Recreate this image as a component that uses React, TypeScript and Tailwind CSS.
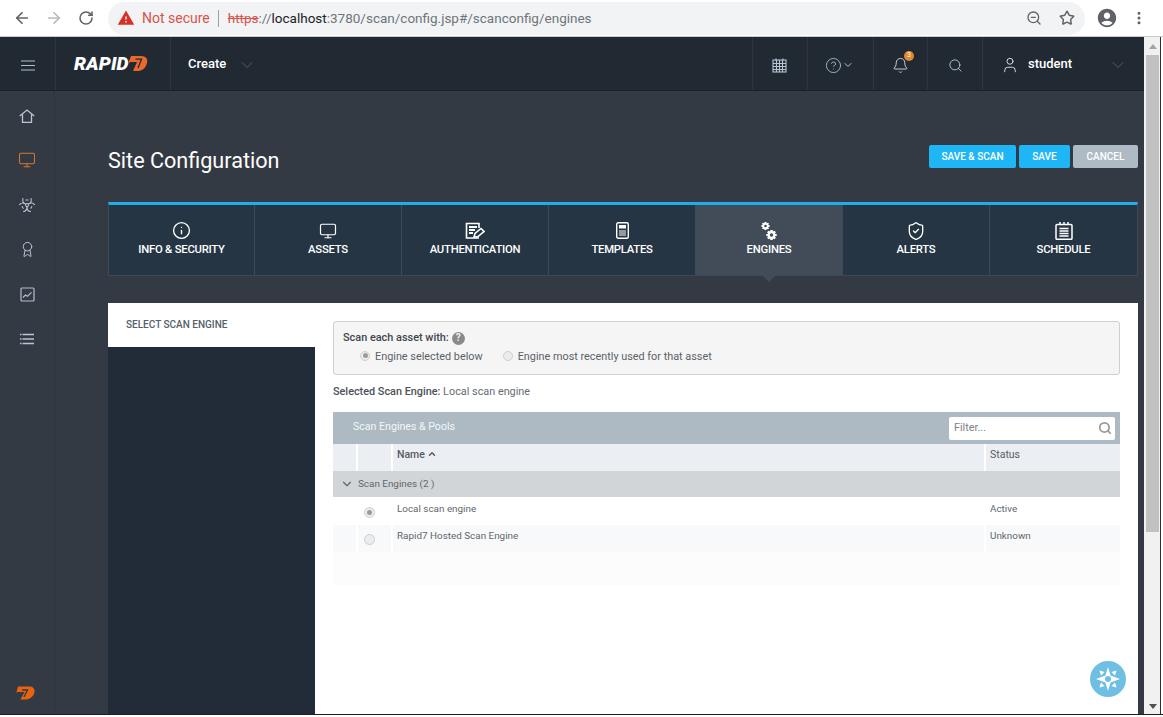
import { ArrowLeft, ArrowRight, RotateCw, ZoomOut, Star, MoreVertical, ChevronDown, ChevronUp, CircleHelp, Bell, Search, User, Monitor, Biohazard, Award, Info, ShieldCheck } from "lucide-react";
import { MdWarning, MdAccountCircle } from "react-icons/md";
import type { ReactNode } from "react";

const Sep = () => <div className="w-px self-stretch bg-[#2d3641]" />;

function BurgerIcon() {
  return (
    <svg width="14" height="11" viewBox="0 0 14 11" fill="none" stroke="#b4c0ce" strokeWidth="1.200">
      <path d="M0 1h14M0 5.500h14M0 10h14" />
    </svg>
  );
}

function HomeIcon() {
  return (
    <svg width="16" height="14" viewBox="0 0 16 14" fill="none" stroke="#b9c5d3" strokeWidth="1.300">
      <path d="M.8 7L8 1l7.200 6M3.500 5.500v7.800h9V5.500" />
    </svg>
  );
}

function CalendarGrid() {
  return (
    <svg width="15" height="15" viewBox="0 0 15 15" fill="none" stroke="#b7c4d4" strokeWidth="1.100">
      <rect x="1" y="2" width="13" height="12" />
      <path d="M1 5.500h13M1 8.500h13M1 11.500h13M4.500 2v12M7.500 2v12M10.500 2v12M4 .5v2M11 .5v2" />
    </svg>
  );
}

function ChartBox() {
  return (
    <svg width="15" height="15" viewBox="0 0 15 15" fill="none" stroke="#b4c0ce" strokeWidth="1.200">
      <rect x="1" y="1" width="13" height="13" rx="1" />
      <path d="M3 10.500l2.500-2.500 2 1.300 4-4" />
    </svg>
  );
}

function RowsIcon() {
  return (
    <svg width="14" height="12" viewBox="0 0 14 12" fill="none" stroke="#b9c5d3" strokeWidth="1.300">
      <path d="M2.500 1.500H14M2.500 6H14M2.500 10.500H14M0 1.500h1.500M0 6h1.500M0 10.500h1.500" />
    </svg>
  );
}

function AuthIcon() {
  return (
    <svg width="20" height="18" viewBox="0 0 20 18" fill="none" stroke="#fff" strokeWidth="1.600">
      <path d="M14 16H1.500V1.500H14V6" />
      <path d="M4 5h8M4 8h6M4 11h4" strokeWidth="2" />
      <path d="M9 15l1-3.500 6-5 3 3-6 5z" fill="#253544" />
    </svg>
  );
}

function TemplatesIcon() {
  return (
    <svg width="13" height="17" viewBox="0 0 13 17" fill="none" stroke="#fff" strokeWidth="1.400">
      <rect x=".7" y=".7" width="11.600" height="15.600" rx="1.500" />
      <rect x="3" y="3" width="7" height="3.500" fill="#fff" stroke="none" />
      <path d="M3 9h7M3 11h7M3 13h7" strokeWidth="1" />
    </svg>
  );
}

function Gear({ cx, cy, r }: { cx: number; cy: number; r: number }) {
  const teeth = [0, 45, 90, 135, 180, 225, 270, 315];
  return (
    <g>
      {teeth.map((a) => (
        <rect key={a} x={cx - r * 0.28} y={cy - r * 1.3} width={r * 0.56} height={r * 2.6} fill="#fff" transform={`rotate(${a} ${cx} ${cy})`} />
      ))}
      <circle cx={cx} cy={cy} r={r} fill="#fff" />
      <circle cx={cx} cy={cy} r={r * 0.45} fill="#424c58" />
    </g>
  );
}

function EnginesIcon() {
  return (
    <svg width="16" height="20" viewBox="0 0 16 20">
      <Gear cx={4.500} cy={5} r={3} />
      <Gear cx={10.500} cy={14} r={3.800} />
    </svg>
  );
}

function ScheduleIcon() {
  return (
    <svg width="18" height="18" viewBox="0 0 18 18" fill="none" stroke="#fff" strokeWidth="1.500">
      <rect x="1" y="2.500" width="16" height="14.800" rx="1" />
      <path d="M5 0v3M9 0v3M13 0v3" />
      <path d="M4.500 6.500h9M4.500 9h9M4.500 11.500h9M4.500 14h9" strokeWidth="1.300" />
    </svg>
  );
}

function Tab({ icon, label, active, width }: { icon: ReactNode; label: string; active?: boolean; width: string }) {
  return (
    <div className={`relative flex h-full flex-col items-center justify-center border-r border-[#3a4a5a] last:border-r-0 ${width} ${active ? "bg-[#424c58]" : ""}`}>
      <div className="flex h-[20px] items-center justify-center">{icon}</div>
      <div className="mb-[2px] mt-[1px] text-[11.300px] font-medium leading-[16px] tracking-[-0.25px] text-white">{label}</div>
      {active && <div className="absolute left-1/2 top-full ml-[-7px] h-0 w-0 border-x-[7px] border-t-[7px] border-x-transparent border-t-[#424c58]" />}
    </div>
  );
}

function Radio({ on, size }: { on?: boolean; size: string }) {
  return (
    <span className={`flex items-center justify-center rounded-full border border-[#cfcfcf] bg-[#ececec] ${size}`}>
      {on && <span className="h-[5px] w-[5px] rounded-full bg-[#9c9c9c]" />}
    </span>
  );
}

function Row({ on, name, status, bg, height, textPad }: { on?: boolean; name: string; status: string; bg: string; height: string; textPad: string }) {
  return (
    <div className={`flex shrink-0 bg-white text-[9.900px] text-[#5f666d] ${height}`}>
      <div className={`w-[23px] ${bg}`} />
      <div className={`ml-[2px] flex w-[33px] items-center justify-center pr-[11px] pt-[2px] ${bg}`}>
        <Radio on={on} size="h-[11px] w-[11px]" />
      </div>
      <div className={`ml-[2px] w-[591px] pl-[4px] ${textPad} ${bg}`}>{name}</div>
      <div className={`ml-[2px] flex-1 pl-[4px] ${textPad} ${bg}`}>{status}</div>
    </div>
  );
}

export default function App() {
  return (
    <div className="flex h-[717px] w-[1163px] flex-col overflow-hidden bg-white font-['Roboto',sans-serif]">
      {/* browser bar */}
      <div className="flex h-[37px] shrink-0 items-center border-b border-[#c9c9c9] bg-white">
        <ArrowLeft size={18} strokeWidth={2.300} className="ml-[13px] text-[#5f6368]" />
        <ArrowRight size={18} strokeWidth={2.300} className="ml-[14px] text-[#b8babd]" />
        <RotateCw size={16} strokeWidth={2.300} className="ml-[15px] text-[#5f6368]" />
        <div className="ml-[14px] flex h-[33px] w-[977px] items-center rounded-full bg-[#f1f3f4] pl-[9px]">
          <MdWarning size={18} className="text-[#d93025]" />
          <span className="ml-[7px] text-[14px] text-[#d8534c]">Not secure</span>
          <span className="ml-[8px] h-[17px] w-px bg-[#9aa0a6]" />
          <span className="ml-[9px] text-[13.500px] text-[#d8534c] line-through">https</span>
          <span className="text-[13.500px] text-[#70757a]">://</span>
          <span className="text-[13.500px] text-[#202124]">localhost</span>
          <span className="text-[13.500px] text-[#70757a]">:3780/scan/config.jsp#/scanconfig/engines</span>
          <ZoomOut size={16} className="ml-auto text-[#5f6368]" />
          <Star size={16} strokeWidth={2.200} className="ml-[17px] mr-[10px] text-[#5f6368]" />
        </div>
        <MdAccountCircle size={22} className="ml-[11px] text-[#5f6368]" />
        <MoreVertical size={16} strokeWidth={2.500} className="ml-[13px] text-[#5f6368]" />
      </div>

      <div className="flex min-h-0 flex-1">
        <div className="flex min-w-0 flex-1 flex-col">
          {/* app header */}
          <div className="flex h-[54px] shrink-0 items-center border-b border-[#1b222b] bg-[#212933] text-white">
            <div className="mt-[3px] flex w-[55px] justify-center">
              <BurgerIcon />
            </div>
            <Sep />
            <div className="flex w-[114px] items-center pl-[18px]">
              <span className="text-[19px] font-black italic leading-none tracking-[0.1px] text-white">RAPID</span>
              <svg width="20" height="15" viewBox="0 0 20 15" className="ml-[-1px]">
                <path d="M3 0h10c5 0 7 3 6 7s-4 8-9 8H5l4-9H2L0 8z" fill="#e9682a" />
                <path d="M7.500 3.200h6L10 12" fill="none" stroke="#212933" strokeWidth="1.300" />
              </svg>
            </div>
            <Sep />
            <span className="ml-[17px] mt-[1px] text-[13px] font-medium">Create</span>
            <ChevronDown size={20} strokeWidth={1} className="ml-[11px] mt-[2px] text-[#5d6875]" />
            <div className="flex-1" />
            <Sep />
            <div className="mt-[3px] flex w-[54px] justify-center pr-[2px]"><CalendarGrid /></div>
            <Sep />
            <div className="mt-[3px] flex w-[65px] items-center justify-center pr-[3px] text-[#b7c4d4]">
              <CircleHelp size={17} strokeWidth={1.200} />
              <ChevronDown size={12} />
            </div>
            <Sep />
            <div className="relative mt-[3px] flex w-[53px] justify-center">
              <Bell size={17} strokeWidth={1.300} className="text-[#d5dbe3]" />
              <span className="absolute left-[30px] top-[-6px] flex h-[10px] w-[10px] items-center justify-center rounded-full bg-[#e0882c] text-[7px] leading-none text-white">3</span>
            </div>
            <Sep />
            <div className="mt-[3px] flex w-[54px] justify-center">
              <Search size={15} strokeWidth={1.500} className="text-[#b7c4d4]" />
            </div>
            <Sep />
            <div className="flex w-[161px] items-center">
              <User size={18} strokeWidth={1.300} className="ml-[18px] mt-[2px] text-[#d5dbe3]" />
              <span className="ml-[9px] mt-[1px] text-[13px] font-medium">student</span>
              <ChevronDown size={20} strokeWidth={1} className="ml-[36px] mt-[2px] text-[#5d6875]" />
            </div>
          </div>

          <div className="flex min-h-0 flex-1 bg-[#333a44]">
            {/* sidebar */}
            <div className="flex w-[55px] shrink-0 flex-col items-center border-r border-[#2e353e] pt-[16px]">
              <div className="flex h-[17px] items-center"><HomeIcon /></div>
              <div className="mt-[27px] flex h-[17px] items-center"><Monitor size={18} strokeWidth={1.400} className="text-[#d9762b]" /></div>
              <div className="mt-[28px] flex h-[17px] items-center"><Biohazard size={18} strokeWidth={1.400} className="text-[#b9c5d3]" /></div>
              <div className="mt-[28px] flex h-[17px] items-center"><Award size={17} strokeWidth={1.400} className="text-[#b9c5d3]" /></div>
              <div className="mt-[28px] flex h-[17px] items-center"><ChartBox /></div>
              <div className="mt-[27px] flex h-[17px] items-center"><RowsIcon /></div>
              <div className="flex-1" />
              <svg width="20" height="14" viewBox="0 0 20 14" className="mb-[14px] mr-[4px]">
                <path d="M3 .5h11c4 0 6 2 5.500 5.500S15.500 13.500 11 13.500H5.500l4-7.500H2L1 8z" fill="#e9620f" />
                <path d="M7 4h5.500L9 11" fill="none" stroke="#333a44" strokeWidth="1.400" />
              </svg>
            </div>

            {/* main */}
            <div className="flex min-w-0 flex-1 flex-col pl-[53px] pr-[6px]">
              <div className="flex h-[111px] shrink-0 items-start justify-between pt-[54px]">
                <h1 className="mt-[1px] text-[21.600px] font-normal leading-[30px] text-white">Site Configuration</h1>
                <div className="flex gap-[3px]">
                  <button className="h-[23px] w-[87px] rounded-[2px] bg-[#1fb6f6] text-[10px] font-medium text-white">SAVE &amp; SCAN</button>
                  <button className="h-[23px] w-[51px] rounded-[2px] bg-[#1fb6f6] text-[10px] font-medium text-white">SAVE</button>
                  <button className="h-[23px] w-[65px] rounded-[2px] bg-[#aebbc5] text-[10px] font-medium text-white">CANCEL</button>
                </div>
              </div>

              {/* tabs */}
              <div className="flex h-[74px] shrink-0 border border-t-[3px] border-[#3a4a5a] border-t-[#1faee8] bg-[#253544]">
                <Tab width="w-[146px]" icon={<Info size={19} strokeWidth={1.700} className="text-white" />} label="INFO & SECURITY" />
                <Tab width="w-[147px]" icon={<Monitor size={18} strokeWidth={1.600} className="text-white" />} label="ASSETS" />
                <Tab width="w-[147px]" icon={<AuthIcon />} label="AUTHENTICATION" />
                <Tab width="w-[147px]" icon={<TemplatesIcon />} label="TEMPLATES" />
                <Tab width="w-[147px]" icon={<EnginesIcon />} label="ENGINES" active />
                <Tab width="w-[147px]" icon={<ShieldCheck size={20} strokeWidth={1.600} className="text-white" />} label="ALERTS" />
                <Tab width="w-[147px]" icon={<ScheduleIcon />} label="SCHEDULE" />
              </div>

              {/* panel */}
              <div className="relative mt-[27px] flex min-h-0 flex-1 bg-white">
                <div className="flex w-[207px] shrink-0 flex-col">
                  <div className="h-[44px] pl-[18px] pt-[15px] text-[10px] font-medium leading-[14px] text-[#55606b]">SELECT SCAN ENGINE</div>
                  <div className="flex-1 bg-[#222c39]" />
                </div>
                <div className="flex min-w-0 flex-1 flex-col pl-[18px] pr-[18px] pt-[18px]">
                  <div className="h-[54px] shrink-0 rounded-[3px] border border-[#cfcfcf] bg-[#f5f5f5] pl-[9px] pt-[8px]">
                    <div className="flex items-center text-[10.900px] font-medium leading-[16px] text-[#3f464d]">
                      Scan each asset with:
                      <span className="ml-[3px] flex h-[13px] w-[13px] items-center justify-center rounded-full bg-[#8a8a8a] text-[10px] font-bold leading-none text-[#eee]">?</span>
                    </div>
                    <div className="ml-[17px] mt-[3px] flex items-center text-[10.850px] leading-[16px] text-[#5a6169]">
                      <span className="mb-[3px]"><Radio on size="h-[10px] w-[10px]" /></span>
                      <span className="ml-[5px]">Engine selected below</span>
                      <span className="mb-[3px] ml-[20px]"><Radio size="h-[10px] w-[10px]" /></span>
                      <span className="ml-[5px]">Engine most recently used for that asset</span>
                    </div>
                  </div>
                  <div className="mt-[9px] shrink-0 text-[10.850px] leading-[16px] text-[#666d74]">
                    <span className="font-medium text-[#4b5259]">Selected Scan Engine:</span> Local scan engine
                  </div>
                  <div className="mt-[12px] flex h-[32px] shrink-0 items-center justify-between bg-[#adbac3] pl-[20px] pr-[5px]">
                    <span className="mb-[3px] text-[10.600px] text-[#f4f6f7]">Scan Engines &amp; Pools</span>
                    <div className="flex h-[23px] w-[166px] items-center justify-between rounded-[2px] bg-white pl-[5px] pr-[3px] text-[10.800px] text-[#7c8288]">
                      Filter...
                      <Search size={14} strokeWidth={3} className="text-[#9a9a9a]" />
                    </div>
                  </div>
                  <div className="flex h-[27px] shrink-0 bg-white text-[10.500px] font-medium text-[#565d64]">
                    <div className="w-[23px] bg-[#ebeff4]" />
                    <div className="ml-[2px] w-[33px] bg-[#ebeff4]" />
                    <div className="ml-[2px] flex w-[591px] items-start bg-[#ebeff4] pl-[4px] pt-[3px]">
                      Name
                      <ChevronUp size={10} strokeWidth={3.500} className="ml-[2px] mt-[2px]" />
                    </div>
                    <div className="ml-[2px] flex-1 bg-[#ebeff4] pl-[4px] pt-[3px] font-normal">Status</div>
                  </div>
                  <div className="flex h-[26px] shrink-0 items-center bg-[#d1d5d8] pl-[7px] text-[9.900px] text-[#5f666d]">
                    <ChevronDown size={14} className="text-[#5f666d]" />
                    <span className="ml-[4px]">Scan Engines (2 )</span>
                  </div>
                  <Row on name="Local scan engine" status="Active" bg="bg-white" height="h-[28px]" textPad="pt-[5px]" />
                  <Row name="Rapid7 Hosted Scan Engine" status="Unknown" bg="bg-[#f7f9fb]" height="h-[27px]" textPad="pt-[4px]" />
                  <div className="h-[33px] shrink-0 bg-[#fcfcfc]" />
                </div>
                <div className="absolute bottom-[17px] right-[12px] flex h-[36px] w-[36px] items-center justify-center rounded-full bg-[#6fbfe4]">
                  <svg width="26" height="26" viewBox="0 0 26 26" fill="#fff">
                    <path d="M13 1l2.500 8.500L25 13l-9.500 3.500L13 25l-2.500-8.500L1 13l9.500-3.500z" />
                    <path d="M4.500 4.500L9.500 6 6 9.500zM21.500 4.500L20 9.500 16.500 6zM4.500 21.500L6 16.500 9.500 20zM21.500 21.500L16.500 20 20 16.500z" />
                    <circle cx="13" cy="13" r="3" fill="#6fbfe4" />
                  </svg>
                </div>
              </div>
            </div>
          </div>
        </div>

        {/* scrollbar */}
        <div className="mr-[2px] flex w-[17px] shrink-0 flex-col border-r border-[#2a2f36] bg-[#f1f1f1] pl-[2px] pr-[1px]">
          <div className="flex h-[18px] items-center justify-center">
            <span className="h-0 w-0 border-x-[4px] border-b-[5px] border-x-transparent border-b-[#a3a3a3]" />
          </div>
          <div className="h-[477px] bg-[#c1c1c1]" />
          <div className="flex-1" />
          <div className="flex h-[16px] items-center justify-center">
            <span className="h-0 w-0 border-x-[4px] border-t-[5px] border-x-transparent border-t-[#505050]" />
          </div>
        </div>
      </div>
      <div className="h-[3px] shrink-0 border-t border-[#1a1d22] bg-white" />
    </div>
  );
}
